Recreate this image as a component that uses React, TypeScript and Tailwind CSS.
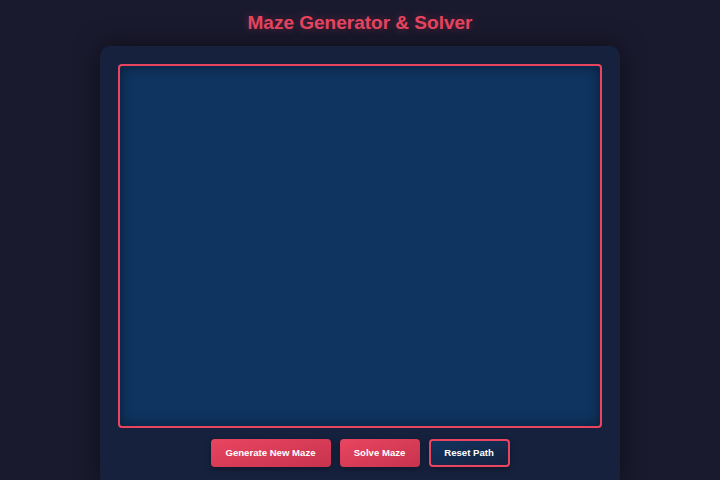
export default function App() {
  return (
    <main
      className="min-h-screen w-full bg-[#1a1a2e] flex flex-col items-center overflow-hidden"
      style={{ fontFamily: '"Liberation Sans", Arial, sans-serif' }}
    >
      <h1 className="mt-[11px] h-[24px] text-[19px] leading-[24px] font-bold text-[#e94560] [text-shadow:0_0_8px_rgba(233,69,96,0.35)]">
        Maze Generator &amp; Solver
      </h1>

      {/* panel */}
      <section className="mt-[11px] w-[520px] bg-[#16213e] rounded-[10px] p-[18px] pb-[20px] shadow-[0_0_24px_rgba(0,0,0,0.5)] flex flex-col items-center">
        <div className="w-[484px] h-[364px] border-2 border-[#e94560] rounded-[4px] bg-[#0f3460] shadow-[inset_0_0_14px_rgba(0,0,0,0.45)]" />

        <div className="mt-[11px] flex gap-[9px]">
          <button className="h-[28px] w-[120px] rounded-[4px] bg-gradient-to-br from-[#e94560] to-[#c7334e] text-white text-[9.6px] font-bold shadow-[0_2px_6px_rgba(0,0,0,0.35)]">
            Generate New Maze
          </button>
          <button className="h-[28px] w-[80px] rounded-[4px] bg-gradient-to-br from-[#e94560] to-[#c7334e] text-white text-[9.6px] font-bold shadow-[0_2px_6px_rgba(0,0,0,0.35)]">
            Solve Maze
          </button>
          <button className="h-[28px] w-[81px] rounded-[4px] border-2 border-[#e94560] bg-gradient-to-br from-[#0f3460] to-[#16213e] text-white text-[9.6px] font-bold shadow-[0_2px_6px_rgba(0,0,0,0.35)]">
            Reset Path
          </button>
        </div>
      </section>
    </main>
  );
}
